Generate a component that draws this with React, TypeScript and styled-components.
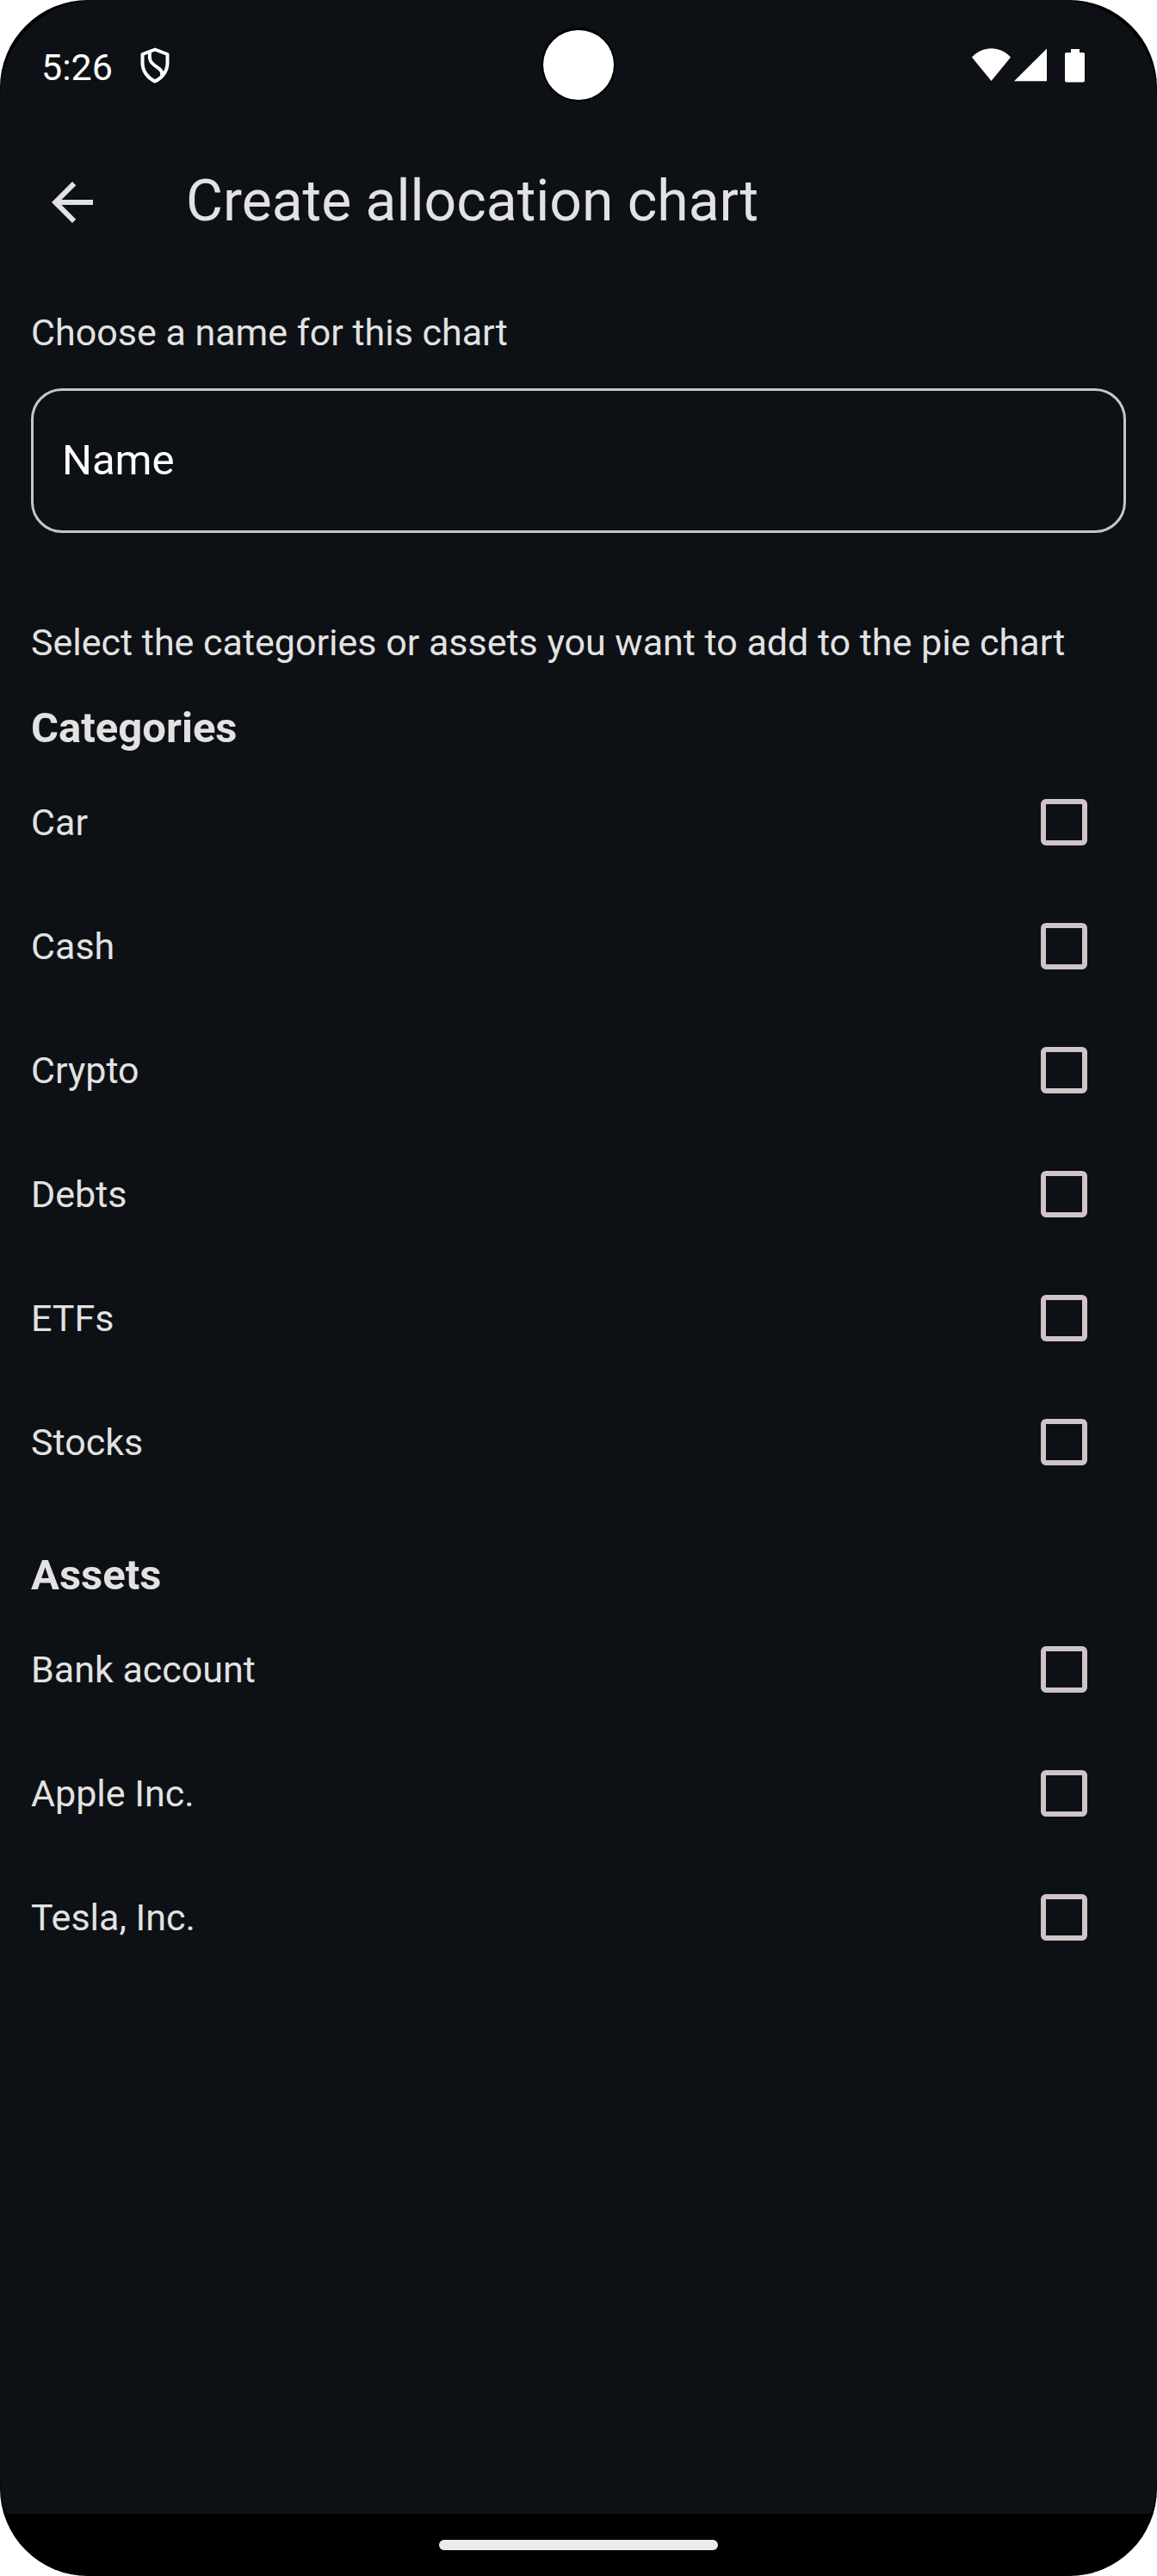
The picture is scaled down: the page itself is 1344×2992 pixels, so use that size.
import React from "react";
import styled, { createGlobalStyle } from "styled-components";

const colors = {
  surface: "#0d1014",
  text: "#e2e2e2",
  outline: "#c6c6c6",
  checkbox: "#cfc4c7",
  handle: "#ebebeb",
};

const GlobalStyle = createGlobalStyle`
  *, *::before, *::after { box-sizing: border-box; }
  body {
    margin: 0;
    background: #fff;
    color: ${colors.text};
    font-family: Roboto, "Liberation Sans", sans-serif;
  }
`;

const Device = styled.div`
  background: #000;
  border-radius: 102px;
  overflow: hidden;
`;

const Screen = styled.div`
  position: relative;
  display: flex;
  flex-direction: column;
  min-height: 100vh;
  background: ${colors.surface};
  border-radius: 112px;
  overflow: hidden;
`;

const StatusBar = styled.div`
  display: flex;
  align-items: center;
  justify-content: space-between;
  height: 151px;
  padding: 0 84px 0 48px;
  color: #fff;
`;

const StatusGroup = styled.div<{ $gap: number }>`
  display: flex;
  align-items: center;
  gap: ${(p) => p.$gap}px;
`;

const Clock = styled.time`
  font-size: 43px;
  line-height: 48px;
  padding-top: 4px;
`;

const Camera = styled.div`
  position: absolute;
  top: 32px;
  left: 50%;
  width: 86px;
  height: 86px;
  margin-left: -43px;
  border: 2px solid #000;
  border-top-width: 3px;
  border-radius: 50%;
  background: #fff;
`;

const Glyph = styled.svg`
  display: block;
  flex: none;
  fill: currentColor;
`;

const AppBar = styled.header`
  display: flex;
  align-items: center;
  gap: 72px;
  height: 168px;
  padding: 0 24px;
`;

const BackButton = styled.button`
  display: grid;
  place-items: center;
  width: 120px;
  height: 120px;
  padding: 0;
  border: 0;
  border-radius: 50%;
  background: none;
  color: inherit;
  cursor: pointer;
`;

const Title = styled.h1`
  margin: 0;
  padding-bottom: 2px;
  font-size: 66px;
  font-weight: 400;
  line-height: 84px;
`;

const Form = styled.form`
  flex: 1;
  padding: 36px;
`;

const FieldLabel = styled.label`
  display: block;
  font-size: 43px;
  line-height: 62px;
`;

const NameInput = styled.input`
  display: block;
  width: 100%;
  height: 168px;
  margin: 34px 0 96px;
  padding: 0 33px 2px;
  border: 3px solid ${colors.outline};
  border-radius: 36px;
  background: transparent;
  color: #fff;
  font: 49px Roboto, "Liberation Sans", sans-serif;
  outline: none;

  &::placeholder {
    color: #fff;
    opacity: 1;
  }
`;

const Hint = styled.p`
  margin: 0 0 34px;
  font-size: 43px;
  line-height: 62px;
`;

const Section = styled.section`
  & + & {
    margin-top: 48px;
  }
`;

const SectionTitle = styled.h2`
  margin: 0 0 2px;
  font-size: 49px;
  font-weight: 700;
  line-height: 70px;
`;

const OptionRow = styled.label`
  display: flex;
  align-items: center;
  justify-content: space-between;
  height: 144px;
  padding-right: 45px;
  font-size: 43px;
  line-height: 62px;
  cursor: pointer;
`;

const Checkbox = styled.input`
  appearance: none;
  width: 54px;
  height: 54px;
  margin: 0;
  border: 6px solid ${colors.checkbox};
  border-radius: 6px;
  cursor: pointer;

  &:checked {
    background: ${colors.checkbox};
  }
`;

const NavigationBar = styled.div`
  display: flex;
  justify-content: center;
  height: 72px;
  padding-top: 30px;
  background: #000;
`;

const Handle = styled.div`
  width: 324px;
  height: 12px;
  border-radius: 6px;
  background: ${colors.handle};
`;

const sections = [
  { title: "Categories", items: ["Car", "Cash", "Crypto", "Debts", "ETFs", "Stocks"] },
  { title: "Assets", items: ["Bank account", "Apple Inc.", "Tesla, Inc."] },
];

const ShieldIcon = () => (
  <Glyph width="36" height="42" viewBox="0 0 36 42" aria-hidden="true">
    <g fill="none" stroke="currentColor" strokeWidth="4" strokeLinejoin="round">
      <path d="M17 2.500 31.500 8V18C31.500 27.500 25.500 35.500 17 39.500 8.500 35.500 2.500 27.500 2.500 18V8Z" />
      <path d="M11 5C10 15.500 12 17.500 18 22 23 25.500 26 27.500 25 32.500" />
    </g>
  </Glyph>
);

const WifiIcon = () => (
  <Glyph width="45" height="40" viewBox="0 0 45 40" aria-hidden="true">
    <path d="M0 10.500C12.500-3.200 32.500-3.200 45 10.500L22.500 38Z" />
  </Glyph>
);

const SignalIcon = () => (
  <Glyph width="38" height="40" viewBox="0 0 38 40" aria-hidden="true">
    <path d="M38 .5V38.300H0Z" />
  </Glyph>
);

const BatteryIcon = () => (
  <Glyph width="23" height="40" viewBox="0 0 23 40" aria-hidden="true">
    <path d="M7 1H17V5H21Q23 5 23 7V37.500Q23 39.500 21 39.500H2Q0 39.500 0 37.500V7Q0 5 2 5H7Z" />
  </Glyph>
);

const BackIcon = () => (
  <Glyph width="72" height="72" viewBox="0 0 24 24" aria-hidden="true">
    <path d="M20 11H7.830l5.590-5.590L12 4l-8 8 8 8 1.410-1.410L7.830 13H20v-2z" />
  </Glyph>
);

export default function App() {
  return (
    <>
      <GlobalStyle />
      <Device>
        <Screen>
          <StatusBar>
            <StatusGroup $gap={32}>
              <Clock>5:26</Clock>
              <ShieldIcon />
            </StatusGroup>
            <StatusGroup $gap={21}>
              <StatusGroup $gap={4}>
                <WifiIcon />
                <SignalIcon />
              </StatusGroup>
              <BatteryIcon />
            </StatusGroup>
          </StatusBar>
          <Camera />
          <AppBar>
            <BackButton type="button" aria-label="Back">
              <BackIcon />
            </BackButton>
            <Title>Create allocation chart</Title>
          </AppBar>
          <Form>
            <FieldLabel htmlFor="chart-name">Choose a name for this chart</FieldLabel>
            <NameInput id="chart-name" type="text" placeholder="Name" />
            <Hint>Select the categories or assets you want to add to the pie chart</Hint>
            {sections.map((section) => (
              <Section key={section.title}>
                <SectionTitle>{section.title}</SectionTitle>
                {section.items.map((item) => (
                  <OptionRow key={item}>
                    {item}
                    <Checkbox type="checkbox" name={item} />
                  </OptionRow>
                ))}
              </Section>
            ))}
          </Form>
          <NavigationBar>
            <Handle />
          </NavigationBar>
        </Screen>
      </Device>
    </>
  );
}
